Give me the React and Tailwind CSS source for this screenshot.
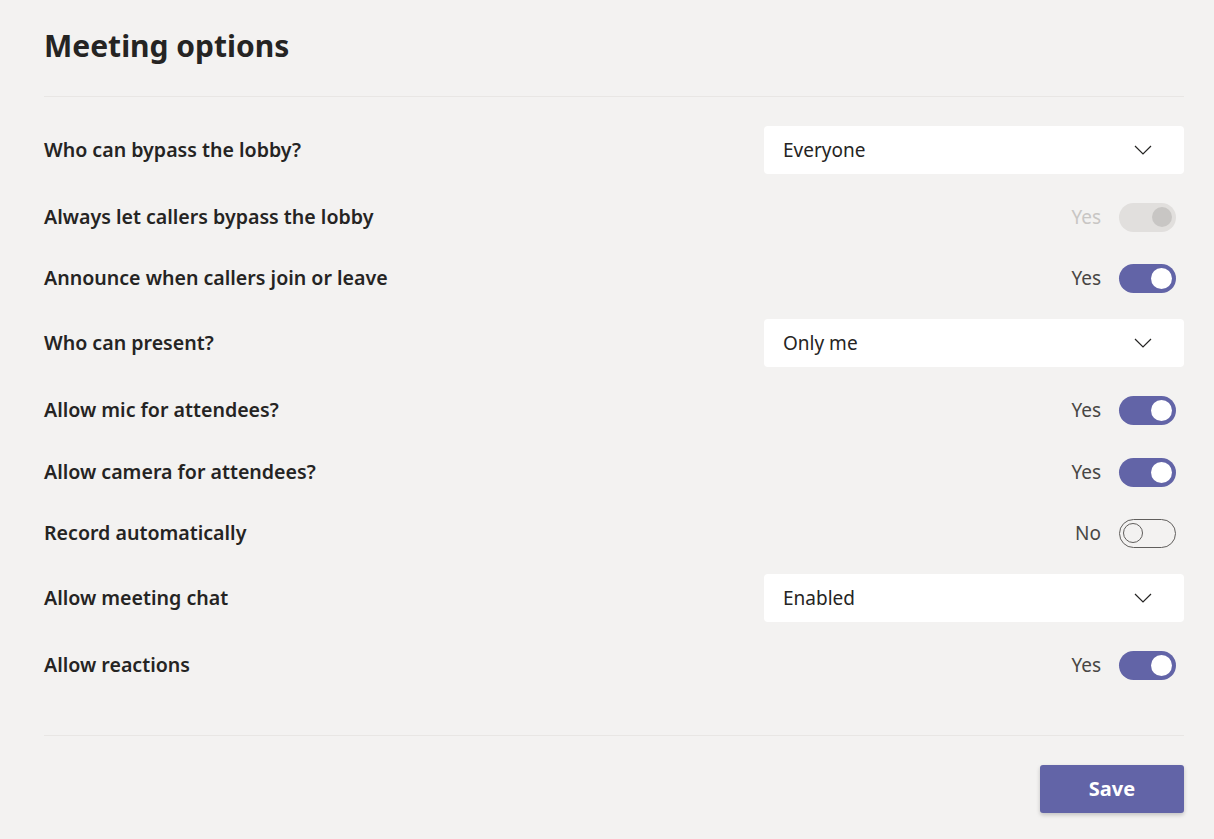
import React, { useState } from 'react';

const FONT = { fontFamily: '"Noto Sans", "Open Sans", Arial, sans-serif' };

function Chevron() {
  return (
    <svg width="18" height="10" viewBox="0 0 18 10" fill="none">
      <path d="M1 1l8 8 8-8" stroke="#252423" strokeWidth="1.2" />
    </svg>
  );
}

function Dropdown({ value }) {
  return (
    <button className="flex h-[48px] w-[420px] items-center justify-between rounded-[4px] bg-white pl-[19px] pr-[32px] text-[19px] text-[#252423]">
      <span>{value}</span>
      <Chevron />
    </button>
  );
}

function Toggle({ on, disabled }) {
  if (disabled) {
    return (
      <div className="flex items-center gap-[18px]">
        <span className="text-[19px] text-[#c8c6c4]">Yes</span>
        <div className="flex h-[29px] w-[57px] items-center justify-end rounded-full bg-[#e1dfdd] px-[4px]">
          <div className="h-[20px] w-[20px] rounded-full bg-[#c8c6c4]" />
        </div>
      </div>
    );
  }
  return (
    <div className="flex items-center gap-[18px]">
      <span className="text-[19px] text-[#484644]">{on ? 'Yes' : 'No'}</span>
      {on ? (
        <div className="flex h-[29px] w-[57px] items-center justify-end rounded-full bg-[#6264a7] px-[4px]">
          <div className="h-[21px] w-[21px] rounded-full bg-white" />
        </div>
      ) : (
        <div className="flex h-[29px] w-[57px] items-center justify-start rounded-full border border-[#605e5c] px-[3px]">
          <div className="h-[20px] w-[20px] rounded-full border border-[#605e5c]" />
        </div>
      )}
    </div>
  );
}

const ROWS = [
  { label: 'Who can bypass the lobby?', type: 'dd', value: 'Everyone', mt: 'mt-[29px]' },
  { label: 'Always let callers bypass the lobby', type: 'tg', on: true, disabled: true, mt: 'mt-[28px]' },
  { label: 'Announce when callers join or leave', type: 'tg', on: true, mt: 'mt-[31px]' },
  { label: 'Who can present?', type: 'dd', value: 'Only me', mt: 'mt-[26px]' },
  { label: 'Allow mic for attendees?', type: 'tg', on: true, mt: 'mt-[28px]' },
  { label: 'Allow camera for attendees?', type: 'tg', on: true, mt: 'mt-[32px]' },
  { label: 'Record automatically', type: 'tg', on: false, mt: 'mt-[31px]' },
  { label: 'Allow meeting chat', type: 'dd', value: 'Enabled', mt: 'mt-[26px]' },
  { label: 'Allow reactions', type: 'tg', on: true, mt: 'mt-[28px]' },
];

export default function App() {
  const [rows] = useState(ROWS);
  return (
    <div className="min-h-[839px] bg-[#f3f2f1] text-[#252423]" style={FONT}>
      <div className="ml-[44px] mr-[30px] pt-[24px]">
        <h1 className="text-[30px] font-bold leading-[44px]">Meeting options</h1>
        <div className="mt-[28px] h-px bg-[#e8e6e4]" />
        <div className="pb-[55px]">
          {rows.map((r) => (
            <div
              key={r.label}
              className={`flex items-center justify-between ${r.mt} ${r.type === 'dd' ? 'h-[48px]' : 'h-[30px] pr-[8px]'}`}
            >
              <span className="text-[19.6px] font-semibold">{r.label}</span>
              {r.type === 'dd' ? (
                <Dropdown value={r.value} />
              ) : (
                <Toggle on={r.on} disabled={r.disabled} />
              )}
            </div>
          ))}
        </div>
        <div className="h-px bg-[#e8e6e4]" />
        <div className="flex justify-end pt-[29px]">
          <button className="h-[48px] w-[144px] rounded-[3px] bg-[#6264a7] text-[20px] font-bold text-white shadow-[0_2px_4px_rgba(0,0,0,0.2)]">
            Save
          </button>
        </div>
      </div>
    </div>
  );
}
